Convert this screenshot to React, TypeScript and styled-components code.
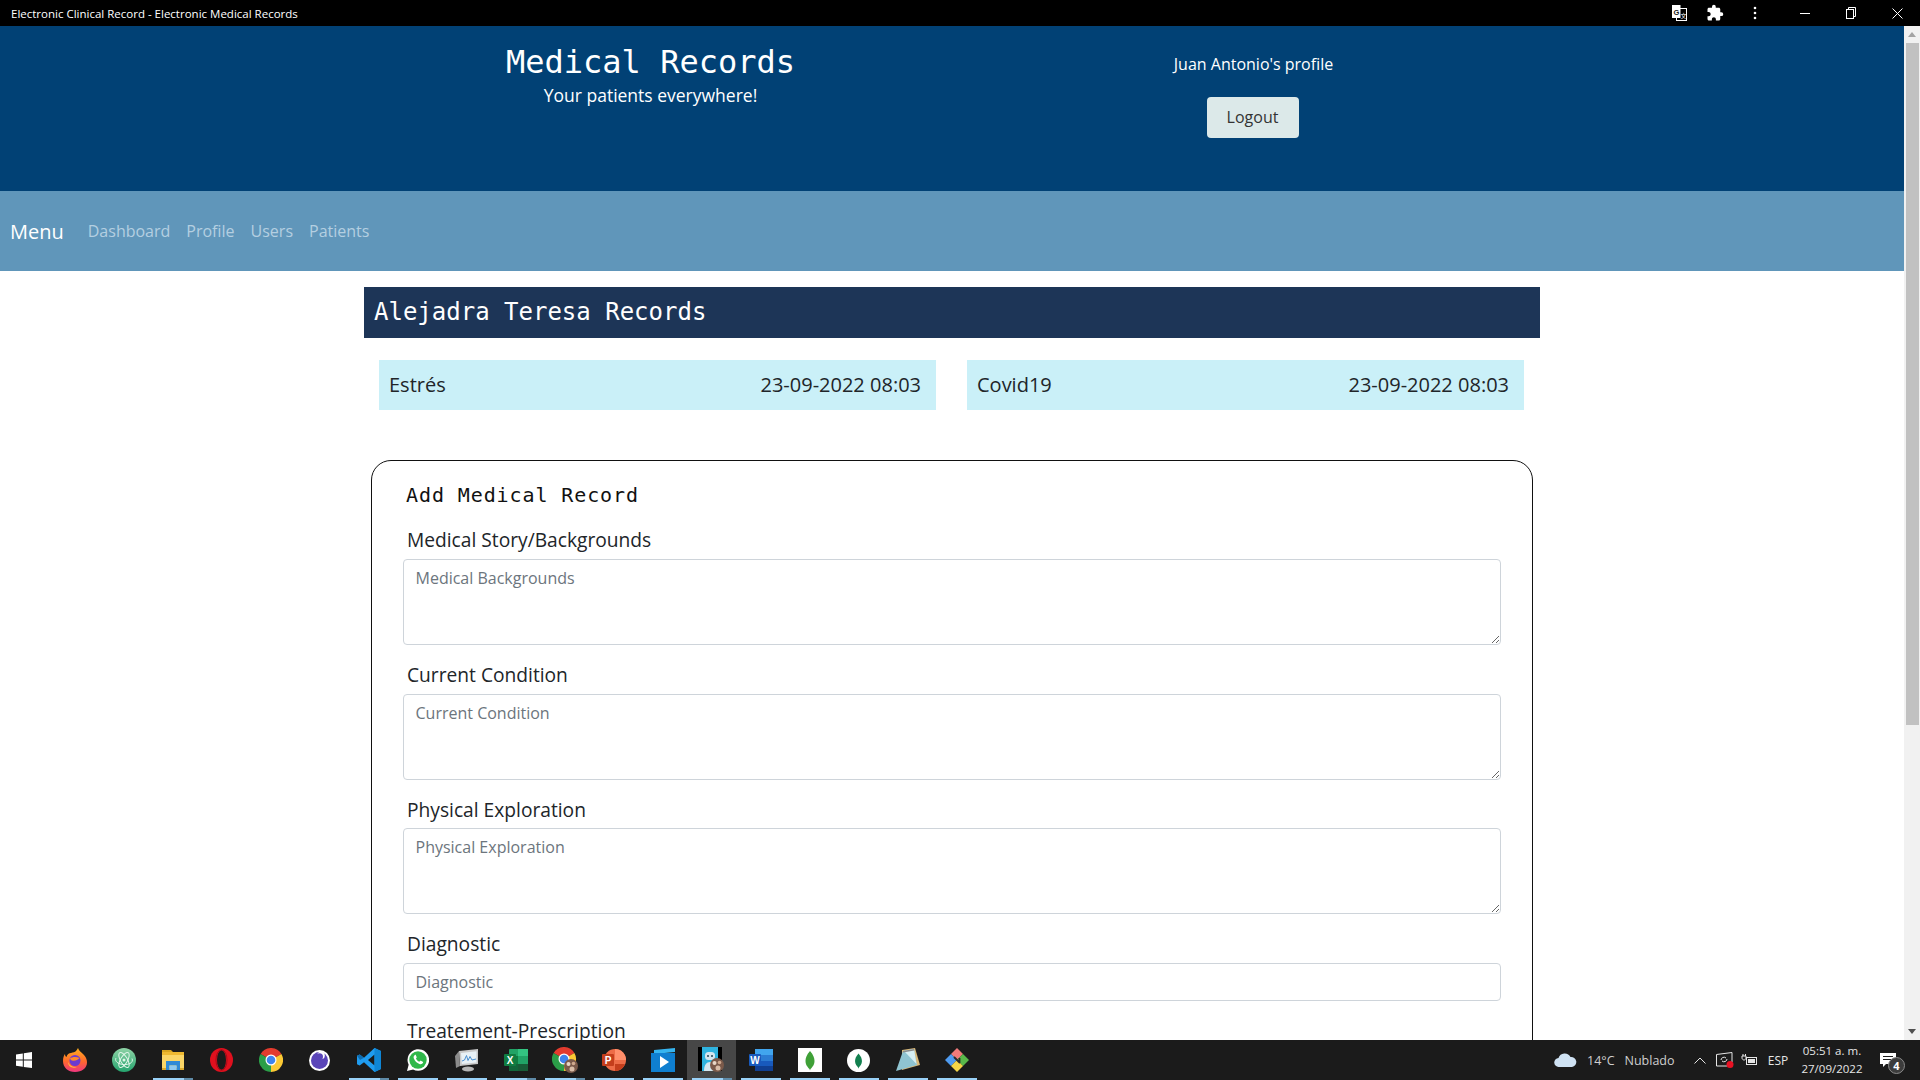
import React from 'react';
import styled, { createGlobalStyle } from 'styled-components';
import { MdExtension } from 'react-icons/md';

const GlobalStyle = createGlobalStyle`
    html, body {
        margin: 0;
        height: 100%;
        overflow: hidden;
        background: #ffffff;
    }
    * {
        box-sizing: border-box;
    }
`;

const sans = `"Open Sans", "Noto Sans", sans-serif`;
const mono = `"DejaVu Sans Mono", "Liberation Mono", monospace`;

const Screen = styled.div`
    height: 100vh;
    display: flex;
    flex-direction: column;
    font-family: ${sans};
`;

/* browser window chrome */
const TitleBar = styled.div`
    height: 26px;
    flex: none;
    background: #000000;
    color: #ffffff;
    display: flex;
    align-items: center;
    padding-left: 11px;
    font-size: 11.5px;
`;

const TitleText = styled.div`
    flex: 1;
    white-space: nowrap;
`;

const TitleIcon = styled.div<{ $w: number }>`
    width: ${(p) => p.$w}px;
    height: 26px;
    display: flex;
    align-items: center;
    justify-content: center;
`;

const Viewport = styled.div`
    flex: 1;
    min-height: 0;
    display: flex;
`;

const Page = styled.div`
    flex: 1;
    min-width: 0;
    overflow: hidden;
`;

const Scrollbar = styled.div`
    width: 16px;
    flex: none;
    background: #f1f1f1;
    display: flex;
    flex-direction: column;
    justify-content: space-between;
`;

const ScrollTop = styled.div`
    display: flex;
    flex-direction: column;
`;

const ScrollArrow = styled.div`
    height: 17px;
    display: flex;
    align-items: center;
    justify-content: center;
`;

const ScrollThumb = styled.div`
    height: 682px;
    width: 13px;
    margin-left: 2px;
    background: #c1c1c1;
`;

/* app header */
const Header = styled.header`
    height: 165px;
    background: #014175;
    color: #ffffff;
    display: flex;
    justify-content: center;
`;

const HeaderRow = styled.div`
    width: 1206px;
    display: grid;
    grid-template-columns: 1fr 1fr;
    text-align: center;
`;

const HeaderCol = styled.div`
    display: flex;
    flex-direction: column;
    align-items: center;
`;

const Brand = styled.h1`
    margin: 15px 0 0;
    font-family: ${mono};
    font-size: 32px;
    line-height: 42px;
    font-weight: 400;
`;

const Tagline = styled.div`
    font-size: 17.5px;
    line-height: 24px;
`;

const ProfileName = styled.div`
    margin-top: 24px;
    font-size: 16px;
    line-height: 28px;
`;

const LogoutButton = styled.button`
    margin: 18.5px 2px 0 0;
    width: 92px;
    height: 41px;
    padding: 0 0 1px;
    border: 0;
    border-radius: 4px;
    background: #dce9e9;
    color: #333333;
    font-family: ${sans};
    font-size: 16px;
`;

const Nav = styled.nav`
    height: 80px;
    background: #6096ba;
    display: flex;
    align-items: center;
    padding-left: 10px;
`;

const NavBrand = styled.div`
    color: #ffffff;
    font-size: 20px;
    margin-right: 24px;
`;

const NavLinks = styled.div`
    display: flex;
    gap: 16px;
`;

const NavLink = styled.a`
    color: #b4cfe1;
    font-size: 16px;
`;

/* records */
const Container = styled.main`
    width: 1176px;
    margin: 0 auto;
    padding-top: 16px;
`;

const RecordsTitle = styled.h2`
    margin: 0;
    height: 51px;
    padding: 0 10px 2px;
    display: flex;
    align-items: center;
    background: #1d3557;
    color: #ffffff;
    font-family: ${mono};
    font-size: 24px;
    font-weight: 400;
`;

const RecordGrid = styled.div`
    display: grid;
    grid-template-columns: 1fr 1fr;
    gap: 31px;
    padding: 22px 16px 0 15px;
`;

const RecordChip = styled.div`
    height: 50px;
    padding: 0 15px 2px 10px;
    display: flex;
    align-items: center;
    justify-content: space-between;
    background: #caf0f8;
    color: #212529;
    font-size: 20px;
`;

const FormCard = styled.form`
    margin: 50px 7px 0;
    padding: 19px 31px 40px;
    border: 1px solid #111111;
    border-radius: 20px;
`;

const FormTitle = styled.h3`
    margin: 0 0 16px;
    padding-left: 3px;
    font-family: ${mono};
    font-size: 20px;
    line-height: 30px;
    font-weight: 400;
    letter-spacing: 0.9px;
    color: #111111;
`;

const Field = styled.div`
    margin-bottom: 16px;
`;

const FieldLabel = styled.label`
    display: block;
    padding-left: 4px;
    margin-bottom: 4px;
    font-size: 19.2px;
    line-height: 28.8px;
    color: #212529;
`;

const controlStyle = `
    display: block;
    width: 100%;
    padding: 6px 11.5px;
    border: 1px solid #ced4da;
    border-radius: 4px;
    background: #ffffff;
    color: #212529;
    font-family: ${sans};
    font-size: 16px;
    line-height: 24px;
    outline: none;
    &::placeholder {
        color: #6c757d;
        opacity: 1;
    }
`;

const TextArea = styled.textarea`
    ${controlStyle}
    height: 86px;
    resize: vertical;
`;

const TextInput = styled.input`
    ${controlStyle}
    height: 38px;
`;

/* windows taskbar */
const Taskbar = styled.footer`
    height: 40px;
    flex: none;
    background: #1b1b1b;
    display: flex;
    align-items: center;
    color: #e6e6e6;
    font-size: 12px;
`;

const StartButton = styled.div`
    width: 50px;
    height: 40px;
    display: flex;
    align-items: center;
    justify-content: center;
    padding-right: 3px;
`;

const TaskButton = styled.div<{ $active?: boolean }>`
    position: relative;
    width: 49px;
    height: 40px;
    display: flex;
    align-items: center;
    justify-content: center;
    background: ${(p) => (p.$active ? '#474747' : 'transparent')};
`;

const RunningMark = styled.span<{ $stacked?: boolean }>`
    position: absolute;
    left: 5px;
    right: 4px;
    bottom: 0;
    height: 2px;
    background: ${(p) =>
        p.$stacked
            ? 'linear-gradient(to right, #99d1f7 77%, #5f8ba8 77%)'
            : '#99d1f7'};
`;

const Tray = styled.div`
    margin-left: auto;
    display: flex;
    align-items: center;
    height: 40px;
`;

const TrayCell = styled.div<{ $w: number }>`
    width: ${(p) => p.$w}px;
    height: 40px;
    display: flex;
    align-items: center;
    justify-content: center;
    white-space: nowrap;
`;

const Weather = styled.div`
    width: 134px;
    display: flex;
    align-items: center;
    font-size: 12.5px;
    color: #cfcfcf;
`;

const WeatherTemp = styled.span`
    margin: 0 10px 0 10px;
`;

const Clock = styled.div`
    width: 72px;
    text-align: center;
    font-size: 11.5px;
    line-height: 18px;
`;

const Notify = styled.div`
    position: relative;
    width: 40px;
    height: 40px;
    display: flex;
    align-items: center;
    justify-content: center;
`;

const NotifyBadge = styled.span`
    position: absolute;
    left: 20px;
    top: 17px;
    width: 17px;
    height: 17px;
    border-radius: 50%;
    background: #3c3c3c;
    border: 1px solid #8a8a8a;
    color: #ffffff;
    font-size: 11px;
    font-weight: 700;
    line-height: 15px;
    text-align: center;
`;

const ShowDesktop = styled.div`
    width: 12px;
`;

/* drawings */
const WindowsLogo = () => (
    <svg width="18" height="18" viewBox="0 0 18 18" fill="#ffffff">
        <path d="M1 3.400 7.800 2.400V8.600H1zM8.800 2.200 17 1V8.600H8.800zM1 9.600H7.800V15.800L1 14.700zM8.800 9.600H17V17L8.800 15.900z" />
    </svg>
);

const Firefox = () => (
    <svg width="24" height="24" viewBox="0 0 24 24">
        <defs>
            <linearGradient id="ffBody" x1="0" y1="0" x2="0" y2="1">
                <stop offset="0" stopColor="#ffb01f" />
                <stop offset=".55" stopColor="#ff6a2c" />
                <stop offset="1" stopColor="#f0367f" />
            </linearGradient>
        </defs>
        <path d="M15 0c1 3 3 4 6 7 2.500 2.500 3 5.500 3 7.500C24 20 19 24 12 24 5 24 0 19.500 0 13 0 10 .8 7.500 2 6c0 1.500.5 2.500 1.500 3C4 6.500 6 5 8 5c2-.5 4-1 5-2 .8-.8 1.500-2 2-3z" fill="url(#ffBody)" />
        <circle cx="12" cy="12.500" r="5.500" fill="#6b3bd1" />
        <path d="M7 10.500c2-1.500 6-2 9.500-.5-1.500 2-5 3.500-7.500 2.500-1-.400-1.500-1-2-2z" fill="#ff8a2c" />
        <path d="M5 14c1.500 4 5 5.500 9 5-4.500 2-9-.500-9-5z" fill="#ffc23d" />
    </svg>
);

const Atom = () => (
    <svg width="24" height="24" viewBox="0 0 24 24">
        <defs>
            <linearGradient id="atomBg" x1="0" y1="0" x2="0" y2="1">
                <stop offset="0" stopColor="#8fd3a6" />
                <stop offset="1" stopColor="#25a46e" />
            </linearGradient>
        </defs>
        <circle cx="12" cy="12" r="12" fill="url(#atomBg)" />
        <g fill="none" stroke="#e2f6ea" strokeWidth="1">
            <ellipse cx="12" cy="12" rx="8.500" ry="3.500" transform="rotate(60 12 12)" />
            <ellipse cx="12" cy="12" rx="8.500" ry="3.500" transform="rotate(-60 12 12)" />
            <path d="M4 10c-1 2 0 4 3 5.500 3 1.500 8 1.500 11 0 2-1 3-3 2-5" />
        </g>
        <circle cx="12" cy="12" r="1.500" fill="#e2f6ea" />
    </svg>
);

const Explorer = () => (
    <svg width="22" height="20" viewBox="0 0 22 20">
        <path d="M0 0H9L11 2H0z" fill="#d9a520" />
        <rect x="0" y="2" width="22" height="18" fill="#fbd667" />
        <rect x="0" y="2" width="22" height="3" fill="#efb931" />
        <rect x="0" y="18" width="22" height="2" fill="#dca92b" />
        <path d="M4 20v-9h14v9h-3.500v-4.500h-7V20z" fill="#2f8ad6" />
        <rect x="7.500" y="15.500" width="7" height="4.500" fill="#8ec9f0" />
    </svg>
);

const Opera = () => (
    <svg width="23" height="24" viewBox="0 0 23 24">
        <ellipse cx="11.500" cy="12" rx="11.500" ry="12" fill="#e0101e" />
        <ellipse cx="11.500" cy="12" rx="4.500" ry="9.800" fill="#1b1b1b" />
        <ellipse cx="11.500" cy="12" rx="5.500" ry="10.300" fill="none" stroke="#a30c17" />
    </svg>
);

const ChromeLogo = () => (
    <g>
        <path d="M12 12 1.600 6A12 12 0 0 1 22.400 6z" fill="#e33b2e" />
        <path d="M12 12 1.600 6A12 12 0 0 0 12 24z" fill="#2b9e48" />
        <path d="M12 12 22.400 6A12 12 0 0 1 12 24z" fill="#fcc934" />
        <circle cx="12" cy="12" r="5.500" fill="#ffffff" />
        <circle cx="12" cy="12" r="4.300" fill="#3f84ee" />
    </g>
);

const Chrome = () => (
    <svg width="24" height="24" viewBox="0 0 24 24"><ChromeLogo /></svg>
);

const Eclipse = () => (
    <svg width="21" height="21" viewBox="0 0 21 21">
        <circle cx="10.500" cy="10.500" r="10.500" fill="#ffffff" />
        <circle cx="10.500" cy="10.500" r="8.500" fill="#5a45b8" />
        <circle cx="12" cy="5.500" r="3.800" fill="#ffffff" />
        <circle cx="10.500" cy="6.800" r="3.500" fill="#5a45b8" />
    </svg>
);

const VSCode = () => (
    <svg width="24" height="24" viewBox="0 0 24 24">
        <path d="M17.500 0 24 3V21L17.500 24 7 14.300 2.700 17.600 0 16.300V7.700L2.700 6.400 7 9.700z" fill="#1f9cf0" />
        <path d="M17.500 6.500 11 12 17.500 17.500z" fill="#1b1b1b" />
        <path d="M17.500 0 24 3V21L17.500 24z" fill="#0f86d6" />
        <path d="M0 7.700 2.700 6.400 7 9.700 3 12z" fill="#0e6cb0" />
    </svg>
);

const WhatsApp = () => (
    <svg width="22" height="22" viewBox="0 0 24 24">
        <path d="M0 24 1.800 17.300A11.800 11.800 0 1 1 6.600 22.300z" fill="#ffffff" />
        <circle cx="12" cy="12" r="9.500" fill="#2fb84a" />
        <path d="M8.600 6.500c-1.300.900-1.800 2.400-1 4.200 1.100 2.600 3.200 4.700 5.900 5.700 1.800.700 3.300.100 4-1.300.300-.600.100-1-.300-1.200l-2-1c-.500-.200-.800-.100-1.100.300l-.600.800c-1.800-.700-2.900-1.900-3.800-3.600l.600-.700c.300-.300.300-.600.200-1L9.700 6.700c-.200-.500-.700-.500-1.100-.200z" fill="#ffffff" />
    </svg>
);

const Monitor = () => (
    <svg width="24" height="24" viewBox="0 0 24 24">
        <path d="M4 3 23 1V16L5 18z" fill="#c9c9c9" />
        <path d="M0 8 4 3 5 18 1 20z" fill="#8c8c8c" />
        <path d="M6 5 21.500 3.200V14.500L6.800 16z" fill="#e8f1f6" />
        <path d="M7 13 9.500 12 11.500 7.500 13 12.500 15 8.500 17 12 21 11" fill="none" stroke="#4a8fd0" strokeWidth="1" />
        <ellipse cx="13" cy="21" rx="6" ry="2.500" fill="#b5b5b5" />
    </svg>
);

const Excel = () => (
    <svg width="24" height="22" viewBox="0 0 24 22">
        <rect x="5" y="0" width="19" height="22" rx="1" fill="#21a366" />
        <rect x="14" y="0" width="10" height="7" fill="#33c481" />
        <rect x="5" y="7" width="9" height="8" fill="#107c41" />
        <rect x="14" y="15" width="10" height="7" fill="#185c37" />
        <rect x="5" y="15" width="9" height="7" fill="#12663a" />
        <rect x="0" y="5" width="12" height="12" rx="1" fill="#107c41" />
        <text x="6" y="14.500" fill="#ffffff" fontSize="10" fontWeight="700" textAnchor="middle" fontFamily="Liberation Sans">X</text>
    </svg>
);

const Avatar = () => (
    <g>
        <circle cx="0" cy="0" r="7" fill="#7b5a4a" />
        <circle cx="-2.500" cy="-2" r="2" fill="#e9d6c6" />
        <circle cx="2.500" cy="-2.500" r="1.800" fill="#cfa98e" />
        <circle cx="1" cy="3" r="2.500" fill="#d9bda8" />
    </g>
);

const ChromeProfile = () => (
    <svg width="26" height="26" viewBox="0 0 26 26">
        <ChromeLogo />
        <g transform="translate(19 19)"><Avatar /></g>
    </svg>
);

const PowerPoint = () => (
    <svg width="24" height="22" viewBox="0 0 24 22">
        <circle cx="13" cy="11" r="11" fill="#ed6c47" />
        <path d="M13 0a11 11 0 0 1 11 11H13z" fill="#ff8f6b" />
        <path d="M13 22a11 11 0 0 0 10-7H13z" fill="#c43e1c" />
        <rect x="0" y="5" width="12" height="12" rx="1" fill="#c43e1c" />
        <text x="6" y="14.500" fill="#ffffff" fontSize="10" fontWeight="700" textAnchor="middle" fontFamily="Liberation Sans">P</text>
    </svg>
);

const MediaBox = () => (
    <svg width="24" height="24" viewBox="0 0 24 24">
        <path d="M3 2 24 0V4L3 6z" fill="#36b5f0" />
        <rect x="0" y="5" width="24" height="19" fill="#0f7fd0" />
        <path d="M9 8 18 14 9 20z" fill="#ffffff" />
    </svg>
);

const BotApp = () => (
    <svg width="27" height="26" viewBox="0 0 27 26">
        <rect x="0" y="0" width="24" height="24" fill="#000000" />
        <rect x="4" y="0" width="16" height="24" fill="#2fb3df" />
        <rect x="7" y="5" width="10" height="8" rx="3.500" fill="#d5e6ef" />
        <circle cx="10" cy="9" r="1" fill="#234455" />
        <circle cx="14" cy="9" r="1" fill="#234455" />
        <path d="M6 24c0-6 2.500-9 6-9s6 3 6 9z" fill="#d5e6ef" />
        <g transform="translate(19 18)"><Avatar /></g>
    </svg>
);

const Word = () => (
    <svg width="24" height="22" viewBox="0 0 24 22">
        <rect x="6" y="0" width="18" height="22" rx="1" fill="#2b7cd3" />
        <rect x="6" y="0" width="18" height="6" fill="#41a5ee" />
        <rect x="6" y="12" width="18" height="5" fill="#185abd" />
        <rect x="6" y="17" width="18" height="5" fill="#103f91" />
        <rect x="0" y="5" width="12" height="12" rx="1" fill="#185abd" />
        <text x="6" y="14.500" fill="#ffffff" fontSize="10" fontWeight="700" textAnchor="middle" fontFamily="Liberation Sans">W</text>
    </svg>
);

const Leaf = ({ color }: { color: string }) => (
    <path d="M12 3C8.500 7 7.500 10 7.500 13c0 4 2.500 6.500 4 8 .2.600.3 1.200.5 1.500.2-.300.3-.900.5-1.500 1.500-1.500 4-4 4-8 0-3-1-6-4.500-10z" fill={color} />
);

const MongoSquare = () => (
    <svg width="24" height="24" viewBox="0 0 24 24">
        <rect width="24" height="24" fill="#ffffff" />
        <Leaf color="#3fa037" />
    </svg>
);

const MongoRound = () => (
    <svg width="23" height="23" viewBox="0 0 24 24">
        <circle cx="12" cy="12" r="12" fill="#ffffff" />
        <g transform="translate(2.400 2.400) scale(.8)"><Leaf color="#12804f" /></g>
    </svg>
);

const Notepad = () => (
    <svg width="24" height="24" viewBox="0 0 24 24">
        <path d="M6 2 19 0 24 17 6 22z" fill="#d9b878" />
        <path d="M7 3 18 1 21 17 0 23z" fill="#8fc4d1" />
        <path d="M8 3 18 1 20.500 16z" fill="#d6eef2" />
        <path d="M7 3 18 1 18.300 2.500 7 4.500z" fill="#8a8a8a" />
    </svg>
);

const GitGui = () => (
    <svg width="24" height="24" viewBox="0 0 24 24">
        <path d="M12 0 18 6 12 12 6 6z" fill="#f07a7a" />
        <path d="M0 12 6 6 12 12 6 18z" fill="#4f9bf0" />
        <path d="M12 12 18 6 24 12 18 18z" fill="#59b84a" />
        <path d="M12 12 18 18 12 24 6 18z" fill="#f5d547" />
        <path d="M9 9 15 15M14.500 10V15" stroke="#2a2a2a" strokeWidth="1.800" fill="none" />
    </svg>
);

const Translate = () => (
    <svg width="15" height="16" viewBox="0 0 15 16">
        <rect x="4.500" y="3.500" width="10" height="12" fill="#000000" stroke="#ffffff" />
        <path d="M0 0H8.500V13H0z" fill="#ffffff" />
        <text x="4.300" y="9.800" fontSize="7.500" fontWeight="700" fill="#222222" textAnchor="middle" fontFamily="Liberation Sans">G</text>
        <text x="11.500" y="12.500" fontSize="6" fill="#ffffff" textAnchor="middle" fontFamily="Noto Sans CJK SC, sans-serif">文</text>
    </svg>
);

const Kebab = () => (
    <svg width="4" height="14" viewBox="0 0 4 14" fill="#ffffff">
        <circle cx="2" cy="2" r="1.300" />
        <circle cx="2" cy="7" r="1.300" />
        <circle cx="2" cy="12" r="1.300" />
    </svg>
);

const Minimize = () => (
    <svg width="10" height="10" viewBox="0 0 10 10"><path d="M0 5.500H10" stroke="#ffffff" /></svg>
);

const Restore = () => (
    <svg width="10" height="12" viewBox="0 0 10 12" fill="none" stroke="#ffffff">
        <rect x=".5" y="2.500" width="7" height="9" />
        <path d="M2.500 2.500V.5H9.500V9.500H7.500" />
    </svg>
);

const CloseX = () => (
    <svg width="11" height="11" viewBox="0 0 11 11"><path d="M.5.500 10.500 10.500M10.500.500 .5 10.500" stroke="#ffffff" /></svg>
);

const ArrowUp = () => (
    <svg width="8" height="5" viewBox="0 0 8 5"><path d="M4 0 8 5H0z" fill="#a3a3a3" /></svg>
);

const ArrowDown = () => (
    <svg width="8" height="5" viewBox="0 0 8 5"><path d="M0 0H8L4 5z" fill="#505050" /></svg>
);

const Cloud = () => (
    <svg width="23" height="14" viewBox="0 0 23 14">
        <path d="M5 14a4.500 4.500 0 0 1-.5-9A6.500 6.500 0 0 1 16.500 4 5 5 0 0 1 18 14z" fill="#cfe2f3" />
    </svg>
);

const Chevron = () => (
    <svg width="12" height="7" viewBox="0 0 12 7" fill="none" stroke="#e6e6e6"><path d="M.5 6.500 6 1l5.500 5.500" /></svg>
);

const SyncMonitor = () => (
    <svg width="18" height="16" viewBox="0 0 18 16" fill="none" stroke="#e6e6e6">
        <path d="M.5 2.500 16 .5V10" />
        <path d="M.5 2.500V14H11" />
        <path d="M5 8a3 3 0 0 1 5-2M11 7a3 3 0 0 1-5 2" />
        <circle cx="14" cy="12.500" r="3.500" fill="#e81123" stroke="none" />
    </svg>
);

const Battery = () => (
    <svg width="17" height="12" viewBox="0 0 17 12" fill="none" stroke="#e6e6e6">
        <rect x="5.500" y="3.500" width="10" height="7" />
        <rect x="7" y="5" width="7" height="4" fill="#e6e6e6" stroke="none" />
        <path d="M2 0V2M4.500 0V2M1 2H5V4C5 5 4 6 3 6S1 5 1 4z" />
    </svg>
);

const NotifyGlyph = () => (
    <svg width="16" height="15" viewBox="0 0 16 15">
        <path d="M0 0H16V11H6L3 14V11H0z" fill="#ffffff" />
        <path d="M3 3.500H13M3 6.500H13" stroke="#1b1b1b" />
    </svg>
);

const taskItems = [
    { id: 'firefox', icon: <Firefox /> },
    { id: 'atom', icon: <Atom /> },
    { id: 'explorer', icon: <Explorer />, running: true, stacked: true },
    { id: 'opera', icon: <Opera /> },
    { id: 'chrome', icon: <Chrome /> },
    { id: 'eclipse', icon: <Eclipse /> },
    { id: 'vscode', icon: <VSCode />, running: true, stacked: true },
    { id: 'whatsapp', icon: <WhatsApp />, running: true },
    { id: 'monitor', icon: <Monitor />, running: true },
    { id: 'excel', icon: <Excel />, running: true, stacked: true },
    { id: 'chrome-profile', icon: <ChromeProfile />, running: true, stacked: true },
    { id: 'powerpoint', icon: <PowerPoint />, running: true },
    { id: 'media', icon: <MediaBox />, running: true },
    { id: 'bot', icon: <BotApp />, running: true, active: true, stacked: true },
    { id: 'word', icon: <Word />, running: true },
    { id: 'mongo-square', icon: <MongoSquare />, running: true },
    { id: 'mongo-round', icon: <MongoRound />, running: true },
    { id: 'notepad', icon: <Notepad />, running: true },
    { id: 'git', icon: <GitGui />, running: true },
];

const fields = [
    { label: 'Medical Story/Backgrounds', placeholder: 'Medical Backgrounds' },
    { label: 'Current Condition', placeholder: 'Current Condition' },
    { label: 'Physical Exploration', placeholder: 'Physical Exploration' },
];

function App() {
    return (
        <Screen>
            <GlobalStyle />
            <TitleBar>
                <TitleText>Electronic Clinical Record - Electronic Medical Records</TitleText>
                <TitleIcon $w={46}><Translate /></TitleIcon>
                <TitleIcon $w={26}><MdExtension size={18} color="#ffffff" /></TitleIcon>
                <TitleIcon $w={54}><Kebab /></TitleIcon>
                <TitleIcon $w={46}><Minimize /></TitleIcon>
                <TitleIcon $w={46}><Restore /></TitleIcon>
                <TitleIcon $w={46}><CloseX /></TitleIcon>
            </TitleBar>
            <Viewport>
                <Page>
                    <Header>
                        <HeaderRow>
                            <HeaderCol>
                                <Brand>Medical Records</Brand>
                                <Tagline>Your patients everywhere!</Tagline>
                            </HeaderCol>
                            <HeaderCol>
                                <ProfileName>Juan Antonio's profile</ProfileName>
                                <LogoutButton type="button">Logout</LogoutButton>
                            </HeaderCol>
                        </HeaderRow>
                    </Header>
                    <Nav>
                        <NavBrand>Menu</NavBrand>
                        <NavLinks>
                            <NavLink>Dashboard</NavLink>
                            <NavLink>Profile</NavLink>
                            <NavLink>Users</NavLink>
                            <NavLink>Patients</NavLink>
                        </NavLinks>
                    </Nav>
                    <Container>
                        <RecordsTitle>Alejadra Teresa Records</RecordsTitle>
                        <RecordGrid>
                            <RecordChip><span>Estrés</span><span>23-09-2022 08:03</span></RecordChip>
                            <RecordChip><span>Covid19</span><span>23-09-2022 08:03</span></RecordChip>
                        </RecordGrid>
                        <FormCard>
                            <FormTitle>Add Medical Record</FormTitle>
                            {fields.map((f) => (
                                <Field key={f.label}>
                                    <FieldLabel>{f.label}</FieldLabel>
                                    <TextArea placeholder={f.placeholder} />
                                </Field>
                            ))}
                            <Field>
                                <FieldLabel>Diagnostic</FieldLabel>
                                <TextInput placeholder="Diagnostic" />
                            </Field>
                            <Field>
                                <FieldLabel>Treatement-Prescription</FieldLabel>
                                <TextArea placeholder="Treatement-Prescription" />
                            </Field>
                        </FormCard>
                    </Container>
                </Page>
                <Scrollbar>
                    <ScrollTop>
                        <ScrollArrow><ArrowUp /></ScrollArrow>
                        <ScrollThumb />
                    </ScrollTop>
                    <ScrollArrow><ArrowDown /></ScrollArrow>
                </Scrollbar>
            </Viewport>
            <Taskbar>
                <StartButton><WindowsLogo /></StartButton>
                {taskItems.map((item) => (
                    <TaskButton key={item.id} $active={item.active}>
                        {item.icon}
                        {item.running && <RunningMark $stacked={item.stacked} />}
                    </TaskButton>
                ))}
                <Tray>
                    <Weather>
                        <Cloud />
                        <WeatherTemp>14°C</WeatherTemp>
                        <span>Nublado</span>
                    </Weather>
                    <TrayCell $w={24}><Chevron /></TrayCell>
                    <TrayCell $w={26}><SyncMonitor /></TrayCell>
                    <TrayCell $w={22}><Battery /></TrayCell>
                    <TrayCell $w={36}>ESP</TrayCell>
                    <Clock>
                        <div>05:51 a. m.</div>
                        <div>27/09/2022</div>
                    </Clock>
                    <Notify>
                        <NotifyGlyph />
                        <NotifyBadge>4</NotifyBadge>
                    </Notify>
                    <ShowDesktop />
                </Tray>
            </Taskbar>
        </Screen>
    );
}

export default App;
